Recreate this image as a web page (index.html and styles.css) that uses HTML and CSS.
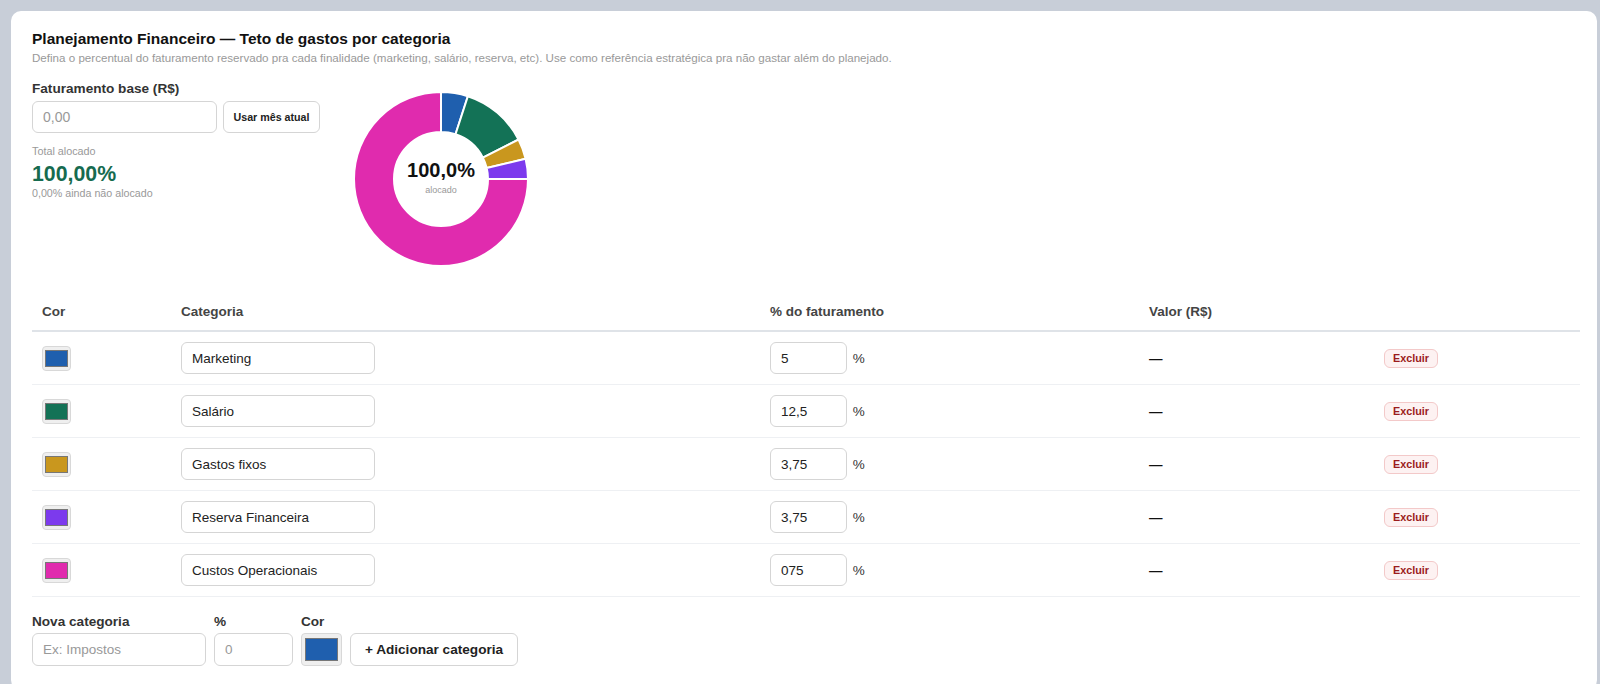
FILE: index.html
```html
<!DOCTYPE html>
<html lang="pt-BR">
<head>
    <meta charset="UTF-8">
    <meta name="viewport" content="width=device-width, initial-scale=1.0">
    <title>Planejamento Financeiro</title>
    <link rel="stylesheet" href="styles.css">
</head>
<body>
    <div class="card">
        <h2 class="card-title">Planejamento Financeiro — Teto de gastos por categoria</h2>
        <p class="card-sub">Defina o percentual do faturamento reservado pra cada finalidade (marketing, salário, reserva, etc). Use como referência estratégica pra não gastar além do planejado.</p>

        <div class="top">
            <div class="base-panel">
                <label class="field-label" for="baseInput">Faturamento base (R$)</label>
                <div class="base-row">
                    <input id="baseInput" class="input base-input" type="text" placeholder="0,00">
                    <button class="btn btn-small">Usar mês atual</button>
                </div>
                <div class="total-label">Total alocado</div>
                <div class="total-value">100,00%</div>
                <div class="total-rest">0,00% ainda não alocado</div>
            </div>

            <div class="donut">
                <svg width="180" height="180" viewBox="0 0 180 180">
                    <!-- 5 / 12,5 / 3,75 / 3,75 / 75 -->
                    <path fill="#1f5fae" d="M90 3 A87 87 0 0 1 116.88 7.26 L104.52 45.30 A47 47 0 0 0 90 43 Z"/>
                    <path fill="#137256" d="M116.88 7.26 A87 87 0 0 1 167.52 50.50 L131.88 68.66 A47 47 0 0 0 104.52 45.30 Z"/>
                    <path fill="#c9971e" d="M167.52 50.50 A87 87 0 0 1 174.60 69.69 L135.70 79.03 A47 47 0 0 0 131.88 68.66 Z"/>
                    <path fill="#7c3aed" d="M174.60 69.69 A87 87 0 0 1 177 90 L137 90 A47 47 0 0 0 135.70 79.03 Z"/>
                    <path fill="#e02bae" d="M177 90 A87 87 0 1 1 90 3 L90 43 A47 47 0 1 0 137 90 Z"/>
                </svg>
                <div class="donut-center">
                    <div class="donut-value">100,0%</div>
                    <div class="donut-label">alocado</div>
                </div>
            </div>
        </div>

        <table class="cat-table">
            <colgroup>
                <col style="width:139px">
                <col style="width:589px">
                <col style="width:379px">
                <col style="width:235px">
                <col style="width:206px">
            </colgroup>
            <thead>
                <tr>
                    <th>Cor</th>
                    <th>Categoria</th>
                    <th>% do faturamento</th>
                    <th>Valor (R$)</th>
                    <th></th>
                </tr>
            </thead>
            <tbody>
                <tr>
                    <td><input class="swatch" type="color" value="#1f5fae"></td>
                    <td><input class="input name-input" type="text" value="Marketing"></td>
                    <td><input class="input pct-input" type="text" value="5"> <span class="pct">%</span></td>
                    <td class="valor">—</td>
                    <td><button class="btn-del">Excluir</button></td>
                </tr>
                <tr>
                    <td><input class="swatch" type="color" value="#137256"></td>
                    <td><input class="input name-input" type="text" value="Salário"></td>
                    <td><input class="input pct-input" type="text" value="12,5"> <span class="pct">%</span></td>
                    <td class="valor">—</td>
                    <td><button class="btn-del">Excluir</button></td>
                </tr>
                <tr>
                    <td><input class="swatch" type="color" value="#c9971e"></td>
                    <td><input class="input name-input" type="text" value="Gastos fixos"></td>
                    <td><input class="input pct-input" type="text" value="3,75"> <span class="pct">%</span></td>
                    <td class="valor">—</td>
                    <td><button class="btn-del">Excluir</button></td>
                </tr>
                <tr>
                    <td><input class="swatch" type="color" value="#7c3aed"></td>
                    <td><input class="input name-input" type="text" value="Reserva Financeira"></td>
                    <td><input class="input pct-input" type="text" value="3,75"> <span class="pct">%</span></td>
                    <td class="valor">—</td>
                    <td><button class="btn-del">Excluir</button></td>
                </tr>
                <tr>
                    <td><input class="swatch" type="color" value="#e02bae"></td>
                    <td><input class="input name-input" type="text" value="Custos Operacionais"></td>
                    <td><input class="input pct-input" type="text" value="075"> <span class="pct">%</span></td>
                    <td class="valor">—</td>
                    <td><button class="btn-del">Excluir</button></td>
                </tr>
            </tbody>
        </table>

        <div class="new-row">
            <div class="new-field">
                <label class="field-label">Nova categoria</label>
                <input class="input new-name" type="text" placeholder="Ex: Impostos">
            </div>
            <div class="new-field">
                <label class="field-label">%</label>
                <input class="input new-pct" type="text" placeholder="0">
            </div>
            <div class="new-field">
                <label class="field-label">Cor</label>
                <input class="swatch swatch-big" type="color" value="#1f5fae">
            </div>
            <button class="btn btn-add">+ Adicionar categoria</button>
        </div>
    </div>
</body>
</html>
```

FILE: styles.css
```css
body {
    margin: 0;
    padding: 11px 3px 0 11px;
    background: #c8ced8;
    font-family: "Liberation Sans", Arial, sans-serif;
    color: #333;
}
.card {
    background: #fff;
    border-radius: 10px;
    padding: 18px 17px 24px 21px;
}
.card-title {
    margin: 0;
    font-size: 15.5px;
    line-height: 20px;
    color: #111;
}
.card-sub {
    margin: 2px 0 0;
    font-size: 11.6px;
    line-height: 14px;
    color: #999;
}
.top {
    display: flex;
    align-items: flex-start;
    gap: 31px;
    margin-top: 16px;
}
.base-panel {
    width: 288px;
}
.field-label {
    display: block;
    font-size: 13.6px;
    line-height: 16px;
    font-weight: bold;
    color: #333;
}
.base-row {
    display: flex;
    gap: 6px;
    margin-top: 4px;
}
.input {
    box-sizing: border-box;
    height: 32px;
    border: 1px solid #d5d5d5;
    border-radius: 6px;
    padding: 0 10px;
    font-family: inherit;
    font-size: 13.5px;
    color: #222;
    background: #fff;
}
.input::placeholder {
    color: #999;
}
.base-input {
    width: 185px;
    font-size: 14px;
}
.btn {
    box-sizing: border-box;
    height: 32px;
    border: 1px solid #d5d5d5;
    border-radius: 6px;
    background: #fff;
    font-family: inherit;
    font-weight: bold;
    color: #222;
    padding: 0 8px;
}
.btn-small {
    width: 97px;
    font-size: 10.7px;
}
.total-label {
    margin-top: 12px;
    font-size: 10.8px;
    line-height: 13px;
    color: #999;
}
.total-value {
    margin-top: 3px;
    font-size: 21.3px;
    line-height: 26px;
    font-weight: bold;
    color: #166b4f;
}
.total-rest {
    font-size: 10.7px;
    line-height: 13px;
    color: #999;
}
.donut {
    position: relative;
    width: 180px;
    height: 180px;
    margin-top: 8px;
}
.donut svg path {
    stroke: #fff;
    stroke-width: 2;
}
.donut-center {
    position: absolute;
    inset: 0 0 4px;
    display: flex;
    flex-direction: column;
    align-items: center;
    justify-content: center;
}
.donut-value {
    font-size: 20px;
    line-height: 22px;
    font-weight: bold;
    color: #111;
}
.donut-label {
    margin-top: 4px;
    font-size: 9px;
    color: #999;
}
.cat-table {
    width: 1548px;
    table-layout: fixed;
    border-collapse: collapse;
    margin-top: 24px;
}
.cat-table th {
    text-align: left;
    font-size: 13.5px;
    line-height: 16px;
    font-weight: bold;
    color: #444;
    padding: 11px 10px 10px;
    border-bottom: 2px solid #dfe3e8;
}
.cat-table td {
    padding: 10px;
    border-bottom: 1px solid #eef0f3;
    vertical-align: middle;
    font-size: 13.5px;
}
.swatch {
    -webkit-appearance: none;
    appearance: none;
    box-sizing: border-box;
    width: 29px;
    height: 25px;
    padding: 0;
    margin: 0;
    border: 1px solid #d8d8d8;
    border-radius: 4px;
    background: #efefef;
    display: block;
}
.swatch::-webkit-color-swatch-wrapper {
    padding: 3px 2px;
}
.swatch::-webkit-color-swatch {
    border: 1px solid #777;
    border-radius: 0;
}
.swatch-big {
    width: 41px;
    height: 33px;
}
.swatch-big::-webkit-color-swatch-wrapper {
    padding: 4px 3px;
}
.name-input {
    width: 194px;
    display: block;
}
.pct-input {
    width: 77px;
    vertical-align: middle;
}
.pct {
    margin-left: 2px;
    vertical-align: middle;
    color: #333;
}
.valor {
    font-weight: bold;
    color: #111;
}
.btn-del {
    height: 19px;
    padding: 0 8px;
    border: 1px solid #f3c9c9;
    border-radius: 6px;
    background: #fdf2f2;
    color: #9b1c1c;
    font-family: inherit;
    font-size: 10.8px;
    font-weight: bold;
}
.new-row {
    display: flex;
    align-items: flex-end;
    gap: 8px;
    margin-top: 17px;
}
.new-field .field-label {
    margin-bottom: 3px;
}
.new-name {
    width: 174px;
    height: 33px;
}
.new-pct {
    width: 79px;
    height: 33px;
}
.btn-add {
    width: 168px;
    height: 33px;
    font-size: 13.6px;
}
```
